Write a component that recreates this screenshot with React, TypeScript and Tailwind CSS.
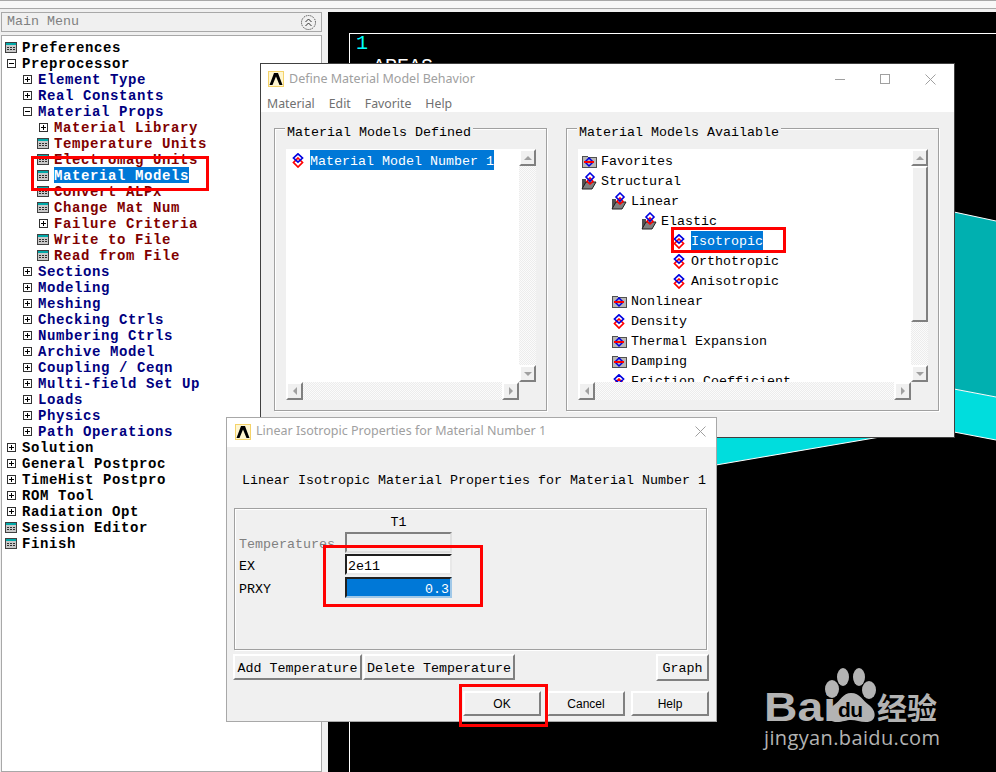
import type { ReactNode } from "react";

type MenuRow = {
  label: string;
  level: number;
  icon: "plus" | "minus" | "calc";
  active?: boolean;
};

const menuRows: MenuRow[] = [
  { label: "Preferences", level: 0, icon: "calc" },
  { label: "Preprocessor", level: 0, icon: "minus" },
  { label: "Element Type", level: 1, icon: "plus" },
  { label: "Real Constants", level: 1, icon: "plus" },
  { label: "Material Props", level: 1, icon: "minus" },
  { label: "Material Library", level: 2, icon: "plus" },
  { label: "Temperature Units", level: 2, icon: "calc" },
  { label: "Electromag Units", level: 2, icon: "calc" },
  { label: "Material Models", level: 2, icon: "calc", active: true },
  { label: "Convert ALPx", level: 2, icon: "calc" },
  { label: "Change Mat Num", level: 2, icon: "calc" },
  { label: "Failure Criteria", level: 2, icon: "plus" },
  { label: "Write to File", level: 2, icon: "calc" },
  { label: "Read from File", level: 2, icon: "calc" },
  { label: "Sections", level: 1, icon: "plus" },
  { label: "Modeling", level: 1, icon: "plus" },
  { label: "Meshing", level: 1, icon: "plus" },
  { label: "Checking Ctrls", level: 1, icon: "plus" },
  { label: "Numbering Ctrls", level: 1, icon: "plus" },
  { label: "Archive Model", level: 1, icon: "plus" },
  { label: "Coupling / Ceqn", level: 1, icon: "plus" },
  { label: "Multi-field Set Up", level: 1, icon: "plus" },
  { label: "Loads", level: 1, icon: "plus" },
  { label: "Physics", level: 1, icon: "plus" },
  { label: "Path Operations", level: 1, icon: "plus" },
  { label: "Solution", level: 0, icon: "plus" },
  { label: "General Postproc", level: 0, icon: "plus" },
  { label: "TimeHist Postpro", level: 0, icon: "plus" },
  { label: "ROM Tool", level: 0, icon: "plus" },
  { label: "Radiation Opt", level: 0, icon: "plus" },
  { label: "Session Editor", level: 0, icon: "calc" },
  { label: "Finish", level: 0, icon: "calc" },
];

const levelIndent = ["pl-[3px]", "pl-[19px]", "pl-[35px]"];
const levelColor = ["text-black", "text-[#000080]", "text-[#800000]"];

type ModelRow = {
  label: string;
  indent: string;
  icon: "closed" | "open" | "diamond";
  active?: boolean;
};

const modelRows: ModelRow[] = [
  { label: "Favorites", indent: "pl-[3px]", icon: "closed" },
  { label: "Structural", indent: "pl-[3px]", icon: "open" },
  { label: "Linear", indent: "pl-[33px]", icon: "open" },
  { label: "Elastic", indent: "pl-[63px]", icon: "open" },
  { label: "Isotropic", indent: "pl-[93px]", icon: "diamond", active: true },
  { label: "Orthotropic", indent: "pl-[93px]", icon: "diamond" },
  { label: "Anisotropic", indent: "pl-[93px]", icon: "diamond" },
  { label: "Nonlinear", indent: "pl-[33px]", icon: "closed" },
  { label: "Density", indent: "pl-[33px]", icon: "diamond" },
  { label: "Thermal Expansion", indent: "pl-[33px]", icon: "closed" },
  { label: "Damping", indent: "pl-[33px]", icon: "closed" },
  { label: "Friction Coefficient", indent: "pl-[33px]", icon: "diamond" },
];

const bevel =
  "border-2 border-t-white border-l-white border-r-[#808080] border-b-[#808080] bg-[#f0f0f0]";
const dither =
  "bg-[repeating-conic-gradient(#ececec_0_25%,#fbfbfb_0_50%)] bg-[length:2px_2px]";

function CalcIcon() {
  return (
    <svg width="12" height="11" viewBox="0 0 12 11" shapeRendering="crispEdges">
      <rect width="12" height="11" fill="#404040" />
      <rect x="1" y="1" width="10" height="2" fill="#00a8a8" />
      <rect x="1" y="3" width="10" height="7" fill="#c8c8c8" />
      <path d="M2 5h2v1H2zM5 5h2v1H5zM8 5h2v1H8zM2 7h2v1H2zM5 7h2v1H5zM8 7h2v1H8z" fill="#303030" />
    </svg>
  );
}

function TreeBox({ open }: { open: boolean }) {
  return (
    <svg width="9" height="9" viewBox="0 0 9 9" shapeRendering="crispEdges" className="ml-[2px]">
      <rect x="0.5" y="0.5" width="8" height="8" fill="#fff" stroke="#303030" />
      <path d="M2 4h5v1H2z" fill="#000" />
      {!open && <path d="M4 2h1v5H4z" fill="#000" />}
    </svg>
  );
}

function DiamondIcon({ className = "" }: { className?: string }) {
  return (
    <svg width="12" height="15" viewBox="0 0 12 15" className={className}>
      <path d="M6 5 10.5 9.5 6 14 1.5 9.5Z" fill="none" stroke="#ff0000" strokeWidth="1.7" />
      <path d="M6 0.8 10.5 5 6 9.2 1.5 5Z" fill="none" stroke="#0000e0" strokeWidth="1.7" />
    </svg>
  );
}

function ClosedFolder() {
  return (
    <svg width="16" height="14" viewBox="0 0 16 14" shapeRendering="crispEdges">
      <path d="M1 2h5l1 1h8v10H1Z" fill="#b8b8b8" stroke="#505050" />
      <path d="M8 4 12 8 8 12 4 8Z" fill="none" stroke="#0000e0" strokeWidth="1.5" shapeRendering="auto" />
      <path d="M3 8h10" stroke="#ff0000" strokeWidth="2" />
    </svg>
  );
}

function OpenFolder() {
  return (
    <svg width="16" height="18" viewBox="0 0 16 18">
      <path d="M1 7h4v10H1Z" fill="#505050" />
      <path d="M1 17 5 10H15L11 17Z" fill="#808080" stroke="#202020" />
      <path d="M9 6 12 9.5 9 12 6 9.5Z" fill="none" stroke="#ff0000" strokeWidth="1.6" />
      <path d="M9 1 13 5 9 9 5 5Z" fill="none" stroke="#0000e0" strokeWidth="1.6" />
    </svg>
  );
}

function Arrow({ dir }: { dir: "up" | "down" | "left" | "right" }) {
  const points = {
    up: "4,1 8,5 0,5",
    down: "0,1 8,1 4,5",
    left: "5,0 5,8 1,4",
    right: "1,0 1,8 5,4",
  }[dir];
  const size = dir === "up" || dir === "down" ? "w-2 h-[6px]" : "w-[6px] h-2";
  return (
    <svg className={size} viewBox={dir === "up" || dir === "down" ? "0 0 8 6" : "0 0 6 8"}>
      <polygon points={points} fill="#a0a0a0" />
    </svg>
  );
}

function ScrollButton({ dir }: { dir: "up" | "down" | "left" | "right" }) {
  const size = dir === "up" || dir === "down" ? "h-[17px] w-[17px]" : "h-[18px] w-[17px]";
  return (
    <div className={`${size} ${bevel} flex shrink-0 items-center justify-center`}>
      <Arrow dir={dir} />
    </div>
  );
}

function AnsysLogo() {
  return (
    <svg width="16" height="16" viewBox="0 0 16 16" className="shrink-0">
      <rect width="16" height="16" fill="#f5d36a" />
      <rect x="1" y="1" width="14" height="14" fill="#fff6d0" />
      <path d="M1.5 14 6 2h4l4.5 12h-3L8 5.5 4.5 14Z" fill="#000" />
    </svg>
  );
}

function GroupBox({ title, className, children }: { title: string; className: string; children: ReactNode }) {
  return (
    <div className={`relative border border-[#a0a0a0] shadow-[inset_1px_1px_0_#ffffff,1px_1px_0_#ffffff] ${className}`}>
      <span className="absolute left-[10px] top-[-4px] bg-[#f0f0f0] px-[2px] text-[13.33px] leading-4 text-black">
        {title}
      </span>
      {children}
    </div>
  );
}

function RedBox({ className }: { className: string }) {
  return <div className={`pointer-events-none absolute border-[3px] border-[#ff0000] ${className}`} />;
}

function MainMenu() {
  return (
    <aside className="flex w-[322px] shrink-0 flex-col pl-px font-['Liberation_Mono',monospace]">
      <div className="flex h-5 items-center justify-between border border-[#a8a8a8] bg-[#f0f0f0] pl-[5px] pr-[5px] text-[13.33px] leading-[22px] text-[#808080]">
        <span>Main Menu</span>
        <svg width="15" height="15" viewBox="0 0 15 15" fill="none" stroke="#303030">
          <circle cx="7.5" cy="7.5" r="7" strokeDasharray="1 1" />
          <path d="M4.5 7 7.5 4 10.5 7M4.5 11 7.5 8 10.5 11" />
        </svg>
      </div>
      <div className="mt-[3px] flex-1 border border-[#a8a8a8] bg-white pt-[3px]">
        {menuRows.map((row) => (
          <div
            key={row.label}
            className={`flex h-4 items-center text-[14px] font-bold tracking-[0.6px] ${levelIndent[row.level]} ${levelColor[row.level]}`}
          >
            <span className="flex w-[17px] shrink-0 items-center">
              {row.icon === "calc" ? <CalcIcon /> : <TreeBox open={row.icon === "minus"} />}
            </span>
            <span className={`block h-4 leading-[18px] ${row.active ? "bg-[#0078d7] text-white" : ""}`}>{row.label}</span>
          </div>
        ))}
      </div>
    </aside>
  );
}

function GraphicsArea() {
  return (
    <main className="relative flex-1 overflow-hidden border-l-[6px] border-[#f0f0f0] bg-black">
      <svg className="absolute inset-0" width="668" height="760" viewBox="0 0 668 760">
        <polygon points="626,200 668,209 668,385 626,377" fill="#00b0b0" />
        <polygon points="388,453 552,425 626,420 668,428 668,385 626,377 388,377" fill="#00dddd" />
        <polyline points="626,200 668,209" stroke="#fff" fill="none" />
        <polyline points="626,377 668,385" stroke="#fff" fill="none" />
        <polyline points="388,453 552,425 626,420 668,428" stroke="#fff" fill="none" />
      </svg>
      <div className="absolute left-[21px] top-[21px] h-[760px] w-[700px] border-l border-t border-white pl-[6px] font-['Liberation_Mono',monospace] text-[20px] leading-[20px]">
        <div className="text-[#00ffff]">1</div>
        <div className="pl-[17px] pt-[3px] text-white">AREAS</div>
      </div>
    </main>
  );
}

function DefineWindow() {
  return (
    <section className="absolute left-[260px] top-[63px] flex h-[375px] w-[695px] flex-col border border-[#404040] bg-[#f0f0f0]">
      <header className="h-12 bg-white font-['Noto_Sans',sans-serif]">
        <div className="flex h-[30px] items-center pl-[7px]">
          <AnsysLogo />
          <span className="ml-[5px] text-[12.5px] text-[#a0a0a0]">Define Material Model Behavior</span>
          <div className="ml-auto flex items-center gap-[35px] pr-[18px]">
            <svg width="10" height="10" viewBox="0 0 10 10" stroke="#a0a0a0"><path d="M0 5.5h10" /></svg>
            <svg width="10" height="10" viewBox="0 0 10 10" stroke="#a0a0a0" fill="none"><rect x="0.5" y="0.5" width="9" height="9" /></svg>
            <svg width="11" height="11" viewBox="0 0 11 11" stroke="#a0a0a0"><path d="M0.5 0.5l10 10M10.5 0.5l-10 10" /></svg>
          </div>
        </div>
        <nav className="flex pl-[6px] text-[12.3px] leading-5 text-[#707070]">
          <span>Material</span>
          <span className="ml-[14px]">Edit</span>
          <span className="ml-[14px]">Favorite</span>
          <span className="ml-[14px]">Help</span>
        </nav>
      </header>
      <div className="flex gap-[19px] pl-[13px] pt-4 font-['Liberation_Mono',monospace]">
        <GroupBox title="Material Models Defined" className="h-[283px] w-[273px] pl-[11px] pt-5">
          <div className="grid h-[251px] w-[250px] grid-cols-[233px_17px] grid-rows-[233px_18px]">
            <div className="bg-white pl-[6px] pt-[1px]">
              <div className="flex h-5 items-center text-[13.33px]">
                <DiamondIcon />
                <span className="ml-[6px] block h-5 bg-[#0078d7] leading-6 text-white">Material Model Number 1</span>
              </div>
            </div>
            <div className="flex flex-col">
              <ScrollButton dir="up" />
              <div className={`flex-1 ${dither}`} />
              <ScrollButton dir="down" />
            </div>
            <div className={`flex justify-between ${dither}`}>
              <ScrollButton dir="left" />
              <ScrollButton dir="right" />
            </div>
          </div>
        </GroupBox>
        <GroupBox title="Material Models Available" className="h-[283px] w-[373px] pl-[11px] pt-5">
          <div className="grid h-[251px] w-[350px] grid-cols-[333px_17px] grid-rows-[233px_18px]">
            <div className="overflow-hidden bg-white pt-[2px]">
              {modelRows.map((row) => (
                <div key={row.label} className={`flex h-5 items-center text-[13.33px] ${row.indent}`}>
                  <span className="flex h-5 w-4 shrink-0 items-center justify-center">
                    {row.icon === "closed" && <ClosedFolder />}
                    {row.icon === "open" && <OpenFolder />}
                    {row.icon === "diamond" && <DiamondIcon />}
                  </span>
                  <span className={`ml-1 block h-5 leading-[22px] ${row.active ? "bg-[#0078d7] text-white" : "text-black"}`}>
                    {row.label}
                  </span>
                </div>
              ))}
            </div>
            <div className="flex flex-col">
              <ScrollButton dir="up" />
              <div className={`h-[156px] ${bevel}`} />
              <div className={`flex-1 ${dither}`} />
              <ScrollButton dir="down" />
            </div>
            <div className={`flex justify-between ${dither}`}>
              <ScrollButton dir="left" />
              <ScrollButton dir="right" />
            </div>
          </div>
        </GroupBox>
      </div>
    </section>
  );
}

function PropField({ label, value, tone, className = "" }: { label: string; value?: string; tone: "off" | "text" | "active"; className?: string }) {
  const fieldTone = {
    off: "border-t-[#808080] border-l-[#808080] border-r-[#e0e0e0] border-b-[#e0e0e0] bg-[#f0f0f0]",
    text: "border-t-[#202020] border-l-[#202020] border-r-[#e8e8e8] border-b-[#e8e8e8] bg-white text-black pl-[1px]",
    active: "border-t-[#202020] border-l-[#202020] border-r-[#a0c8e8] border-b-[#a0c8e8] bg-[#0078d7] text-white text-right pr-[1px]",
  }[tone];
  return (
    <div className={`flex h-[21px] text-[13.33px] leading-[25px] ${className}`}>
      <span className={`block h-[21px] w-[108px] shrink-0 whitespace-nowrap pl-[2px] ${tone === "off" ? "text-[#808080]" : "text-black"}`}>
        {label}
      </span>
      <div className={`h-[21px] w-[107px] border-2 leading-[21px] ${fieldTone}`}>{value}</div>
    </div>
  );
}

function DialogButton({ children, className }: { children: ReactNode; className: string }) {
  return <button className={`flex items-center justify-center ${bevel} ${className}`}>{children}</button>;
}

function IsotropicDialog() {
  return (
    <section className="absolute left-[226px] top-[417px] flex h-[305px] w-[491px] flex-col border border-[#a8a8a8] bg-[#f0f0f0] font-['Liberation_Mono',monospace]">
      <header className="flex h-[29px] items-center bg-white pb-[2px] pl-2 pr-[10px] font-['Noto_Sans',sans-serif]">
        <AnsysLogo />
        <span className="ml-[5px] text-[12.5px] text-[#a0a0a0]">Linear Isotropic Properties for Material Number 1</span>
        <svg className="ml-auto" width="11" height="11" viewBox="0 0 11 11" stroke="#a0a0a0">
          <path d="M0.5 0.5l10 10M10.5 0.5l-10 10" />
        </svg>
      </header>
      <p className="pl-[15px] pt-[25px] text-[13.33px] leading-[18px] text-black">
        Linear Isotropic Material Properties for Material Number 1
      </p>
      <div className="ml-[7px] mt-[18px] h-[142px] w-[473px] border border-[#a0a0a0] pl-[2px] pt-[6px] shadow-[inset_1px_1px_0_#ffffff,1px_1px_0_#ffffff]">
        <div className="h-[17px] w-[215px] pl-[108px] text-center text-[13.33px] leading-4">T1</div>
        <div className="flex flex-col gap-px">
          <PropField label="Temperatures" tone="off" />
          <PropField label="EX" value="2e11" tone="text" />
          <PropField label="PRXY" value="0.3" tone="active" className="mt-px" />
        </div>
      </div>
      <div className="flex pl-[6px] pr-[7px] pt-1 text-[13.33px]">
        <DialogButton className="h-[26px] w-[129px] pt-[3px]">Add Temperature</DialogButton>
        <DialogButton className="ml-px h-[26px] w-[152px] pt-[3px]">Delete Temperature</DialogButton>
        <DialogButton className="ml-auto h-[27px] w-[53px] pt-[3px]">Graph</DialogButton>
      </div>
      <div className="flex justify-end pr-[7px] pt-[10px] font-['Liberation_Sans',sans-serif] text-[12px]">
        <DialogButton className="h-[25px] w-[78px]">OK</DialogButton>
        <DialogButton className="ml-[6px] h-[25px] w-[78px]">Cancel</DialogButton>
        <DialogButton className="ml-[6px] h-[25px] w-[78px]">Help</DialogButton>
      </div>
    </section>
  );
}

function BaiduWatermark() {
  return (
    <svg className="absolute left-[760px] top-[660px]" width="190" height="100" viewBox="760 660 190 100" fill="#b3b3b3">
      <text x="764" y="721" fontFamily="Liberation Sans" fontWeight="700" fontSize="41" textLength="72" lengthAdjust="spacingAndGlyphs">Bai</text>
      <ellipse cx="843" cy="677" rx="6" ry="9" />
      <ellipse cx="859" cy="677" rx="6" ry="9" />
      <ellipse cx="832" cy="689" rx="7" ry="9" />
      <ellipse cx="869" cy="690" rx="7" ry="9" />
      <path d="M851 693C843 693 840 701 834 705 825 711 826 722 837 722 843 722 846 720 851 720 856 720 860 722 866 722 877 722 877 711 869 705 863 701 860 693 851 693Z" />
      <text x="838" y="717" fontFamily="Liberation Sans" fontWeight="700" fontSize="21" fill="#000" textLength="25">du</text>
      <text x="877" y="719" fontFamily="Noto Sans CJK SC" fontWeight="700" fontSize="30">经验</text>
      <text x="764" y="745" fontFamily="Open Sans" fontSize="20" textLength="176">jingyan.baidu.com</text>
    </svg>
  );
}

export default function App() {
  return (
    <div className="relative flex h-[772px] w-[996px] flex-col overflow-hidden bg-[#f0f0f0]">
      <div className="mb-[3px] h-[9px] shrink-0 border-y border-[#a8a8a8] bg-[#f8f8f8]" />
      <div className="flex min-h-0 flex-1">
        <MainMenu />
        <GraphicsArea />
      </div>
      <DefineWindow />
      <IsotropicDialog />
      <BaiduWatermark />
      <RedBox className="left-[31px] top-[156px] h-[35px] w-[178px]" />
      <RedBox className="left-[671px] top-[227px] h-[26px] w-[115px]" />
      <RedBox className="left-[323px] top-[545px] h-[62px] w-[160px]" />
      <RedBox className="left-[459px] top-[684px] h-[43px] w-[89px]" />
    </div>
  );
}
